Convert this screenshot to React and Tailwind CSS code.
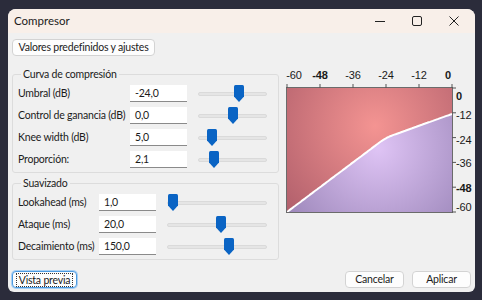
import React from 'react';

const curveRows = [
  { label: 'Umbral (dB)', value: '-24,0', pos: 59 },
  { label: 'Control de ganancia (dB)', value: '0,0', pos: 51 },
  { label: 'Knee width (dB)', value: '5,0', pos: 20 },
  { label: 'Proporción:', value: '2,1', pos: 23 },
];

const smoothRows = [
  { label: 'Lookahead (ms)', value: '1,0', pos: 6 },
  { label: 'Ataque (ms)', value: '20,0', pos: 54 },
  { label: 'Decaimiento (ms)', value: '150,0', pos: 62 },
];

function Slider({ pos }) {
  return (
    <div className="relative h-[17px] flex-1 flex items-center">
      <div className="h-[4px] w-full rounded-[2px] bg-[#e5e5e5] border border-[#dadada]" />
      <svg
        className="absolute top-0 -ml-[5px]"
        style={{ left: `${pos}%` }}
        width="10"
        height="17"
        viewBox="0 0 10 17"
      >
        <path d="M1.5 0 H8.5 Q10 0 10 1.5 V11.5 L5 17 L0 11.5 V1.5 Q0 0 1.5 0 Z" fill="#0a64c4" />
      </svg>
    </div>
  );
}

function Row({ row, labelW }) {
  return (
    <div className="flex items-center h-[17px]">
      <div className="shrink-0 whitespace-nowrap" style={{ width: labelW }}>
        {row.label}
      </div>
      <div className="w-[57px] h-[17px] bg-white border-b border-[#8a8a8a] pl-[5px] leading-[16px] shrink-0">
        {row.value}
      </div>
      <div className="flex-1 flex pl-[11px]">
        <Slider pos={row.pos} />
      </div>
    </div>
  );
}

function Group({ title, rows, labelW }) {
  return (
    <fieldset className="border border-[#dcdcdc] rounded-[3px] pl-[5px] pr-[11px] pb-[4px]">
      <legend className="ml-[3px] px-[2px] leading-[15px]">{title}</legend>
      <div className="flex flex-col gap-[5px] pt-[3px]">
        {rows.map((r) => (
          <Row key={r.label} row={r} labelW={labelW} />
        ))}
      </div>
    </fieldset>
  );
}

// chart geometry, in svg units
const PX0 = 7, PX1 = 172, PY0 = 24, PY1 = 148;
const mx = (db) => PX0 + ((db + 60) / 60) * (PX1 - PX0);
const my = (db) => PY0 + (-db / 60) * (PY1 - PY0);

function gain(x) {
  const t = -24, r = 2.1, w = 5;
  if (2 * (x - t) < -w) return x;
  if (2 * Math.abs(x - t) <= w) return x + ((1 / r - 1) * (x - t + w / 2) ** 2) / (2 * w);
  return t + (x - t) / r;
}

function Chart() {
  const pts = [];
  for (let x = -60; x <= 0; x += 0.5) pts.push([mx(x), my(gain(x))]);
  const line = pts.map((p, i) => `${i ? 'L' : 'M'}${p[0].toFixed(1)} ${p[1].toFixed(1)}`).join(' ');
  const upper = `${line} L${PX1} ${PY0} L${PX0} ${PY0} Z`;
  const lower = `${line} L${PX1} ${PY1} L${PX0} ${PY1} Z`;
  const ticks = [-60, -48, -36, -24, -12, 0];
  const topLabelX = [14, 40, 73, 106, 139, 168];
  const rightLabelY = { 0: 32, '-12': 51, '-24': 76, '-36': 99, '-48': 124, '-60': 143 };
  const font = "'Liberation Sans', Arial, sans-serif";
  return (
    <svg width="194" height="152" viewBox="0 0 194 152" className="block">
      <defs>
        <radialGradient id="red" cx="95" cy="62" r="120" gradientUnits="userSpaceOnUse">
          <stop offset="0" stopColor="#f49492" />
          <stop offset="1" stopColor="#b2606c" />
        </radialGradient>
        <radialGradient id="violet" cx="98" cy="84" r="120" gradientUnits="userSpaceOnUse">
          <stop offset="0" stopColor="#dfc4f5" />
          <stop offset="1" stopColor="#9883b6" />
        </radialGradient>
      </defs>
      <path d={upper} fill="url(#red)" />
      <path d={lower} fill="url(#violet)" />
      <path d={line} fill="none" stroke="#ffffff" strokeWidth="2" />
      <rect x={PX0 - 0.5} y={PY0 - 0.5} width={PX1 - PX0 + 1} height={PY1 - PY0 + 1} fill="none" stroke="#6b6b6b" />
      {ticks.map((t, i) => (
        <g key={t}>
          <line x1={mx(t)} x2={mx(t)} y1={PY0 - 4} y2={PY0} stroke="#555" />
          <text
            x={topLabelX[i]}
            y="15"
            textAnchor="middle"
            fontSize="11"
            fontWeight={t === -48 || t === 0 ? 700 : 400}
            fill="#1a1a1a"
            fontFamily={font}
          >
            {t}
          </text>
          <line x1={PX1} x2={PX1 + 4} y1={my(t)} y2={my(t)} stroke="#555" />
          <text
            x="176"
            y={rightLabelY[t] + 4}
            fontSize="11"
            fontWeight={t === -48 || t === 0 ? 700 : 400}
            fill="#1a1a1a"
            fontFamily={font}
          >
            {t}
          </text>
        </g>
      ))}
    </svg>
  );
}

function Button({ children, className = '' }) {
  return (
    <div
      className={`h-[17px] flex items-center justify-center whitespace-nowrap rounded-[4px] bg-[#fdfdfd] border border-[#d3d3d3] ${className}`}
    >
      {children}
    </div>
  );
}

export default function App() {
  return (
    <div className="w-[482px] h-[300px] bg-[#2b2c3b] pt-[9px] pl-[8px] font-['Lato','Noto_Sans',sans-serif] text-[10.5px] tracking-[-0.2px] text-[#1b1b1b]">
      <div className="w-[467px] h-[283px] rounded-t-[8px] rounded-b-[6px] overflow-hidden bg-[#f0f0f0] flex flex-col">
        {/* title bar */}
        <div className="h-[24px] bg-[#f8efe9] flex items-center pl-[6px] text-[11.5px] tracking-normal">
          <span className="flex-1">Compresor</span>
          <div className="flex items-center">
            <div className="w-[37px] flex justify-center">
              <svg width="10" height="10" viewBox="0 0 10 10">
                <line x1="0" y1="5.5" x2="10" y2="5.5" stroke="#222" strokeWidth="1" />
              </svg>
            </div>
            <div className="w-[37px] flex justify-center">
              <svg width="10" height="10" viewBox="0 0 10 10">
                <rect x="0.5" y="0.5" width="9" height="9" rx="1.5" fill="none" stroke="#222" strokeWidth="1" />
              </svg>
            </div>
            <div className="w-[37px] flex justify-center mr-[3px]">
              <svg width="10" height="10" viewBox="0 0 10 10">
                <path d="M0.5 0.5 L9.5 9.5 M9.5 0.5 L0.5 9.5" stroke="#222" strokeWidth="1" />
              </svg>
            </div>
          </div>
        </div>

        {/* body */}
        <div className="flex-1 flex flex-col px-[4px] pt-[6px]">
          <div className="flex">
            <Button className="w-[143px]">Valores predefinidos y ajustes</Button>
          </div>

          <div className="flex mt-[11px]">
            <div className="w-[267px] shrink-0 flex flex-col gap-[3px]">
              <Group title="Curva de compresión" rows={curveRows} labelW={112} />
              <Group title="Suavizado" rows={smoothRows} labelW={81} />
            </div>
            <div className="ml-[1px] -mt-[3px] shrink-0">
              <Chart />
            </div>
          </div>

          <div className="flex items-center mt-[11px]">
            <div className="w-[65px] h-[17px] rounded-[4px] bg-[#fdfdfd] border border-[#4c9ae0] ring-1 ring-[#a9d0f3] flex items-center justify-center whitespace-nowrap">
              <span className="outline outline-1 outline-dotted outline-[#333] px-[2px] leading-[12px]">Vista previa</span>
            </div>
            <div className="flex-1" />
            <Button className="w-[59px]">Cancelar</Button>
            <Button className="w-[59px] ml-[8px]">Aplicar</Button>
          </div>
        </div>
      </div>
    </div>
  );
}
